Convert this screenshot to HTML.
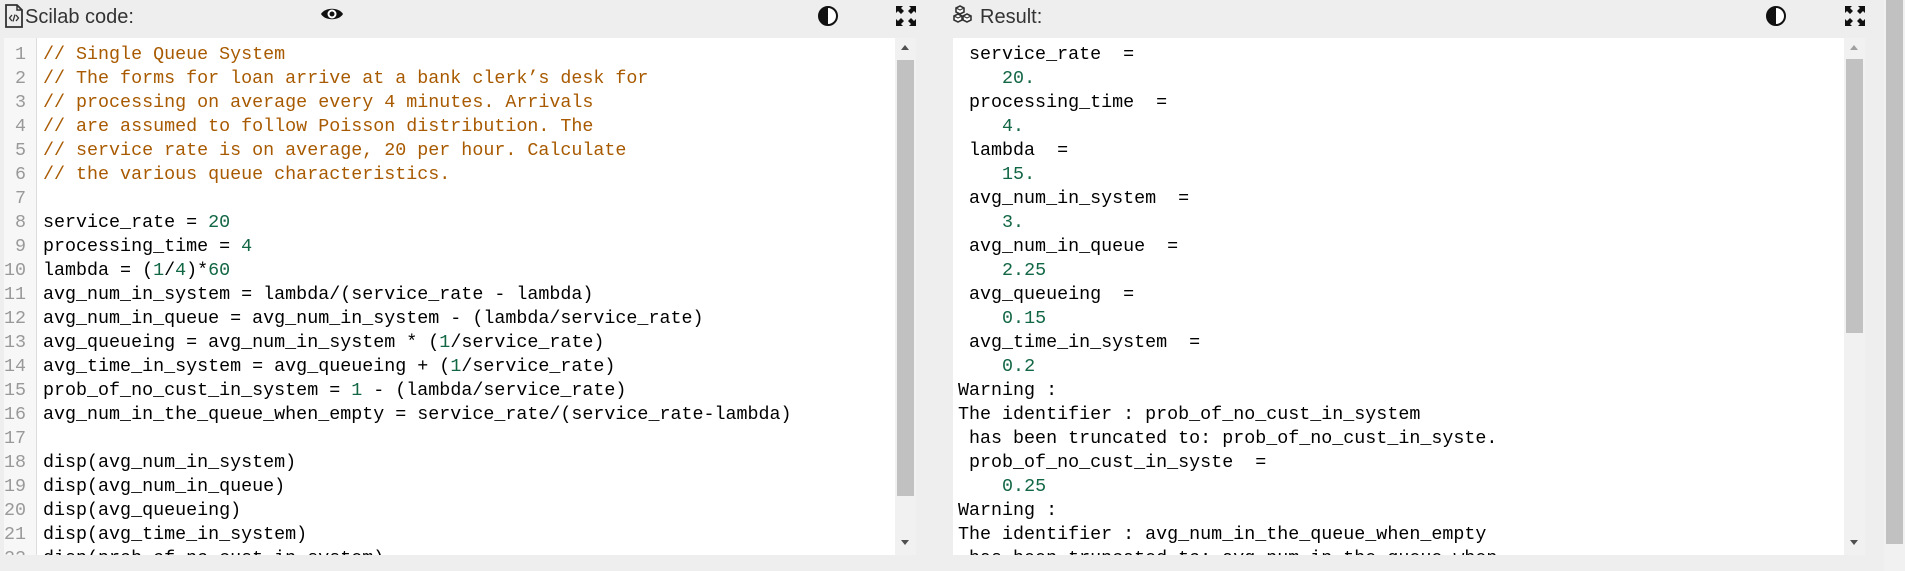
<!DOCTYPE html>
<html><head><meta charset="utf-8">
<style>
*{margin:0;padding:0;box-sizing:border-box}
html,body{width:1905px;height:571px;overflow:hidden;background:#eeeeee;font-family:"Liberation Sans",sans-serif}
.abs{position:absolute}
.hdr{font-size:20px;color:#333;top:3px;line-height:28px}
.mono{font-family:"Liberation Mono",monospace;font-size:18.35px;line-height:24px;white-space:pre;color:#000}
.c{color:#a85a00}
.n{color:#116644}
.gut{background:#f7f7f7;border-right:1px solid #ddd;color:#999;text-align:right;padding-right:10px}
.sb{background:#f1f1f1}
.th{background:#c1c1c1}
</style></head><body>

<svg class="abs" style="left:4px;top:4px" width="20" height="24" viewBox="0 0 20 24"><path d="M2 1h11l5 5v17H2z" fill="none" stroke="#333" stroke-width="1.8"/><path d="M13 1v5h5" fill="none" stroke="#333" stroke-width="1.5"/><path d="M8 11l-2.5 3 2.5 3M12 11l2.5 3-2.5 3M11 10.5l-2 7" fill="none" stroke="#333" stroke-width="1.3"/></svg>
<div class="abs hdr" style="left:25px">Scilab code:</div>
<svg class="abs" style="left:320px;top:4px" width="24" height="20" viewBox="0 0 24 20"><path d="M1 10C5 3 19 3 23 10C19 17 5 17 1 10z" fill="#111"/><circle cx="12" cy="10" r="4.5" fill="#fff"/><circle cx="12" cy="10" r="2.5" fill="#111"/></svg>
<svg class="abs" style="left:817px;top:5px" width="22" height="22" viewBox="0 0 22 22"><circle cx="11" cy="11" r="9" fill="#fff" stroke="#111" stroke-width="2"/><path d="M11 2a9 9 0 0 0 0 18z" fill="#111"/></svg>
<svg class="abs" style="left:896px;top:6px" width="20" height="20" viewBox="0 0 20 20" fill="#111"><path d="M0 0h7l-2 2 3 3-3 3-3-3-2 2zM20 0v7l-2-2-3 3-3-3 3-3-2-2zM0 20v-7l2 2 3-3 3 3-3 3 2 2zM20 20h-7l2-2-3-3 3-3 3 3 2-2z"/></svg>

<div class="abs" style="left:4px;top:38px;width:912px;height:517px;background:#fff;overflow:hidden">
<div class="abs mono gut" style="left:0;top:0;width:33px;height:517px;padding-top:5px">1
2
3
4
5
6
7
8
9
10
11
12
13
14
15
16
17
18
19
20
21
22</div>
<div class="abs mono" style="left:39px;top:5px"><span class="c">// Single Queue System
// The forms for loan arrive at a bank clerk’s desk for
// processing on average every 4 minutes. Arrivals
// are assumed to follow Poisson distribution. The
// service rate is on average, 20 per hour. Calculate
// the various queue characteristics.</span>

service_rate = <span class="n">20</span>
processing_time = <span class="n">4</span>
lambda = (<span class="n">1</span>/<span class="n">4</span>)*<span class="n">60</span>
avg_num_in_system = lambda/(service_rate - lambda)
avg_num_in_queue = avg_num_in_system - (lambda/service_rate)
avg_queueing = avg_num_in_system * (<span class="n">1</span>/service_rate)
avg_time_in_system = avg_queueing + (<span class="n">1</span>/service_rate)
prob_of_no_cust_in_system = <span class="n">1</span> - (lambda/service_rate)
avg_num_in_the_queue_when_empty = service_rate/(service_rate-lambda)

disp(avg_num_in_system)
disp(avg_num_in_queue)
disp(avg_queueing)
disp(avg_time_in_system)
disp(prob_of_no_cust_in_system)</div>
<div class="abs sb" style="left:891px;top:0;width:21px;height:517px"></div>
<div class="abs th" style="left:893px;top:22px;width:17px;height:436px"></div>
<svg class="abs" style="left:896px;top:6px" width="10" height="8"><path d="M1 6h8L5 1z" fill="#505050"/></svg>
<svg class="abs" style="left:896px;top:501px" width="10" height="8"><path d="M1 1h8L5 6z" fill="#505050"/></svg>
</div>

<svg class="abs" style="left:953px;top:5px" width="22" height="20" viewBox="0 0 22 20"><g fill="#fff" stroke="#333" stroke-width="1.6"><path d="M7 1l4 2v4l-4 2-4-2V3z"/><path d="M5 9l4 2v4l-4 2-4-2v-4z"/><path d="M14 9l4 2v4l-4 2-4-2v-4z"/></g><path d="M3 3l4 2 4-2M1 11l4 2 4-2M10 11l4 2 4-2" fill="none" stroke="#333" stroke-width="1.2"/></svg>
<div class="abs hdr" style="left:980px">Result:</div>
<svg class="abs" style="left:1765px;top:5px" width="22" height="22" viewBox="0 0 22 22"><circle cx="11" cy="11" r="9" fill="#fff" stroke="#111" stroke-width="2"/><path d="M11 2a9 9 0 0 0 0 18z" fill="#111"/></svg>
<svg class="abs" style="left:1845px;top:6px" width="20" height="20" viewBox="0 0 20 20" fill="#111"><path d="M0 0h7l-2 2 3 3-3 3-3-3-2 2zM20 0v7l-2-2-3 3-3-3 3-3-2-2zM0 20v-7l2 2 3-3 3 3-3 3 2 2zM20 20h-7l2-2-3-3 3-3 3 3 2-2z"/></svg>

<div class="abs" style="left:953px;top:38px;width:912px;height:517px;background:#fff;overflow:hidden">
<div class="abs mono" style="left:5px;top:5px"> service_rate  =
    <span class="n">20.</span>
 processing_time  =
    <span class="n">4.</span>
 lambda  =
    <span class="n">15.</span>
 avg_num_in_system  =
    <span class="n">3.</span>
 avg_num_in_queue  =
    <span class="n">2.25</span>
 avg_queueing  =
    <span class="n">0.15</span>
 avg_time_in_system  =
    <span class="n">0.2</span>
Warning :
The identifier : prob_of_no_cust_in_system
 has been truncated to: prob_of_no_cust_in_syste.
 prob_of_no_cust_in_syste  =
    <span class="n">0.25</span>
Warning :
The identifier : avg_num_in_the_queue_when_empty
 has been truncated to: avg_num_in_the_queue_when_.</div>
<div class="abs sb" style="left:891px;top:0;width:21px;height:517px"></div>
<div class="abs th" style="left:893px;top:21px;width:17px;height:274px"></div>
<svg class="abs" style="left:896px;top:6px" width="10" height="8"><path d="M1 6h8L5 1z" fill="#a0a0a0"/></svg>
<svg class="abs" style="left:896px;top:501px" width="10" height="8"><path d="M1 1h8L5 6z" fill="#505050"/></svg>
</div>

<div class="abs sb" style="left:1884px;top:0;width:21px;height:571px"></div>
<div class="abs th" style="left:1886px;top:0;width:17px;height:544px"></div>
</body></html>
